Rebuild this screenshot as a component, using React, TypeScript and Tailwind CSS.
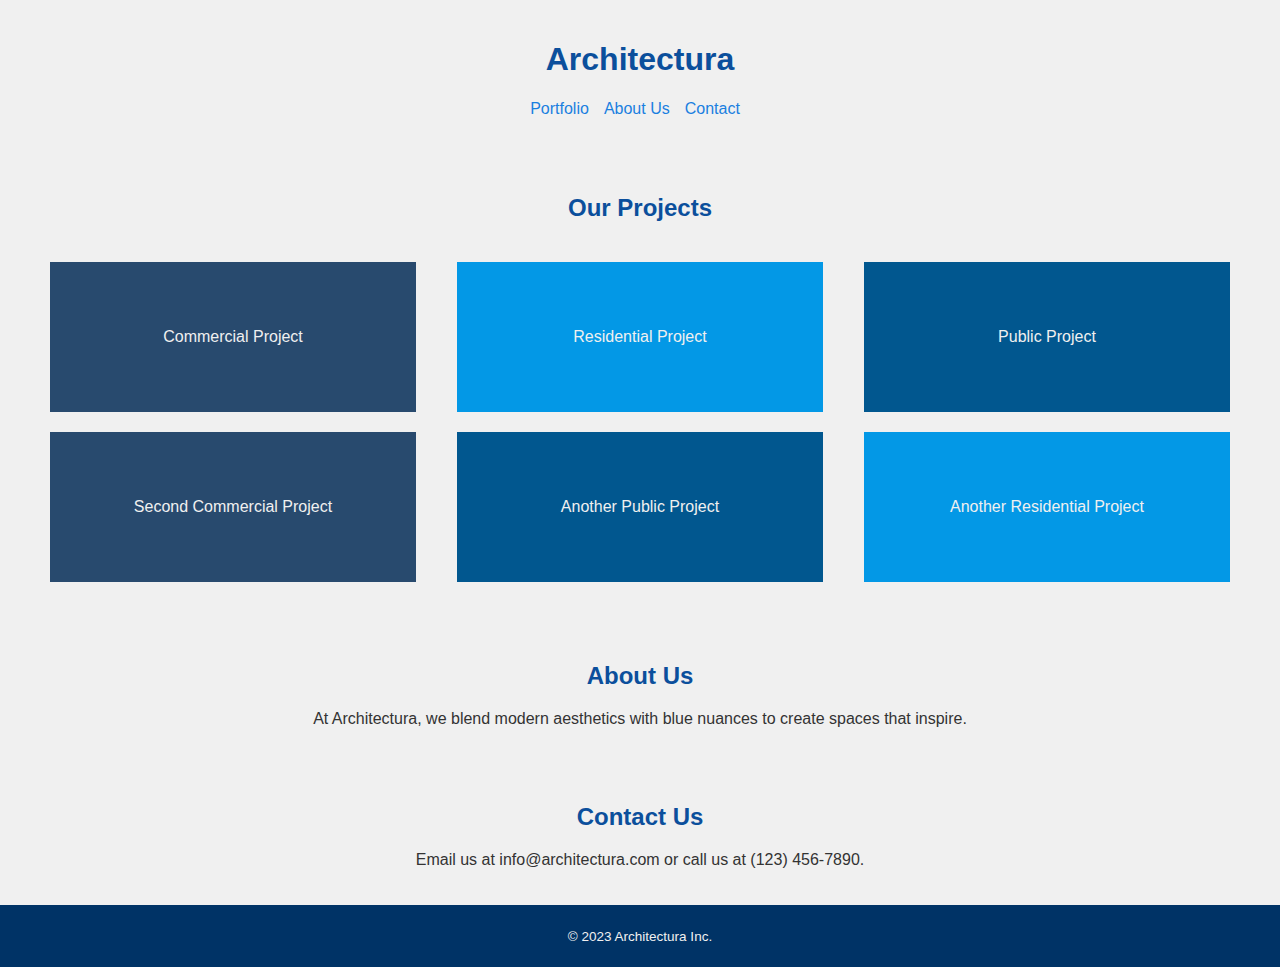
const projects = [
  { name: "Commercial Project", color: "bg-[#284a6e]" },
  { name: "Residential Project", color: "bg-[#0398e6]" },
  { name: "Public Project", color: "bg-[#01578f]" },
  { name: "Second Commercial Project", color: "bg-[#284a6e]" },
  { name: "Another Public Project", color: "bg-[#01578f]" },
  { name: "Another Residential Project", color: "bg-[#0398e6]" },
];

export default function App() {
  return (
    <div className="min-h-[967px] flex flex-col bg-[#f0f0f0] font-['Liberation_Sans',Arial,sans-serif] text-[#333]">
      {/* header */}
      <header className="pt-[41px] text-center">
        <h1 className="text-[32px] font-bold leading-[37px] text-[#0b4f9c]">Architectura</h1>
        <nav className="mt-[22px] flex justify-center gap-[15px] pr-[10px] text-base leading-[18px] text-[#1a7fe0]">
          <a href="#portfolio">Portfolio</a>
          <a href="#about">About Us</a>
          <a href="#contact">Contact</a>
        </nav>
      </header>

      {/* projects */}
      <section id="portfolio" className="mt-[76px] px-[50px] text-center">
        <h2 className="text-2xl font-bold leading-[28px] text-[#0b4f9c]">Our Projects</h2>
        <div className="mt-[40px] grid grid-cols-3 gap-x-[41px] gap-y-5">
          {projects.map((p) => (
            <div
              key={p.name}
              className={`${p.color} flex h-[150px] items-center justify-center text-base text-[#f0f0f0]`}
            >
              {p.name}
            </div>
          ))}
        </div>
      </section>

      {/* about */}
      <section id="about" className="mt-[80px] text-center">
        <h2 className="text-2xl font-bold leading-[28px] text-[#0b4f9c]">About Us</h2>
        <p className="mt-[20px] text-base leading-[18px]">
          At Architectura, we blend modern aesthetics with blue nuances to create spaces that inspire.
        </p>
      </section>

      {/* contact */}
      <section id="contact" className="mt-[75px] text-center">
        <h2 className="text-2xl font-bold leading-[28px] text-[#0b4f9c]">Contact Us</h2>
        <p className="mt-[20px] text-base leading-[18px]">
          Email us at info@architectura.com or call us at (123) 456-7890.
        </p>
      </section>

      <footer className="mt-[36px] flex h-[62px] items-center justify-center bg-[#003366] pt-[2px] text-[13.5px] text-[#f0f0f0]">
        © 2023 Architectura Inc.
      </footer>
    </div>
  );
}
